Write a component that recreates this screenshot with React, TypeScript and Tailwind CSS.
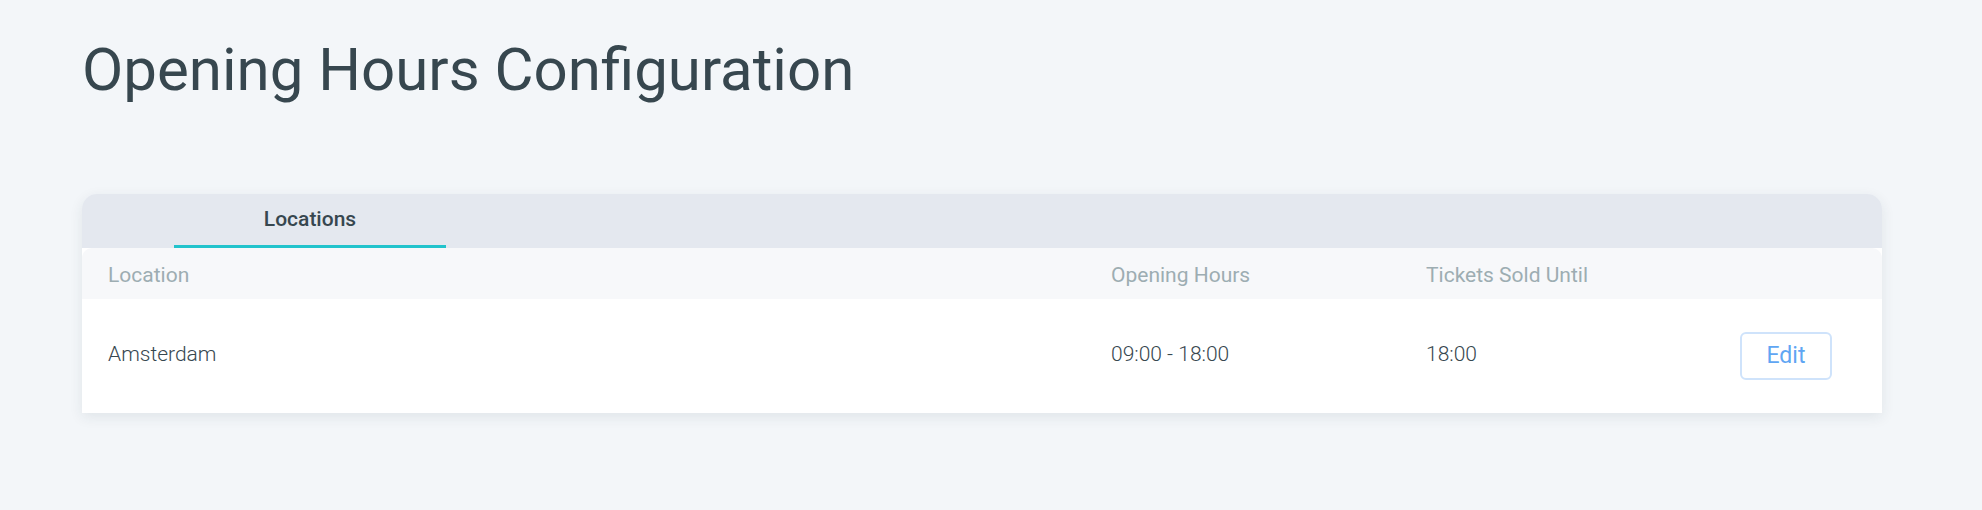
import React from 'react';

type LocationRow = {
  name: string;
  hours: string;
  soldUntil: string;
};

const rows: LocationRow[] = [{ name: 'Amsterdam', hours: '09:00 - 18:00', soldUntil: '18:00' }];

function LocationsTable() {
  return (
    <div className="bg-white">
      <div className="flex h-[51px] items-center rounded-t-[10px] bg-[#f7f8fa] px-[26px] pt-[4px] text-[21px] text-[#9dadb2]">
        <div className="w-[1003px]">Location</div>
        <div className="w-[315px]">Opening Hours</div>
        <div className="w-[314px]">Tickets Sold Until</div>
      </div>
      {rows.map((row) => (
        <div key={row.name} className="flex h-[114px] items-center px-[26px] text-[21px] font-light text-[#37474f]">
          <div className="mb-[3px] w-[1003px]">{row.name}</div>
          <div className="mb-[3px] w-[315px]">{row.hours}</div>
          <div className="mb-[3px] w-[314px]">{row.soldUntil}</div>
          <button className="flex h-[48px] w-[92px] items-center justify-center rounded-[6px] border-2 border-[#cfe3fb] bg-white text-[23px] font-normal text-[#5fa6f3]">
            Edit
          </button>
        </div>
      ))}
    </div>
  );
}

export default function App() {
  return (
    <div className="h-[510px] overflow-hidden bg-[#f3f6f9] pt-[34px] pr-[100px] pl-[82px] font-['Roboto',sans-serif]">
      <h1 className="text-[60px] leading-[72px] font-normal text-[#37474f]">Opening Hours Configuration</h1>
      <div className="mt-[88px] overflow-hidden rounded-t-[15px] shadow-[0_4px_14px_rgba(30,50,70,0.09)]">
        <div className="flex h-[54px] bg-[#e4e8ef] pl-[92px]">
          <div className="flex w-[272px] items-center justify-center border-b-[3px] border-[#22c3cc] text-[21px] font-medium text-[#37474f]">
            Locations
          </div>
        </div>
        <LocationsTable />
      </div>
    </div>
  );
}
